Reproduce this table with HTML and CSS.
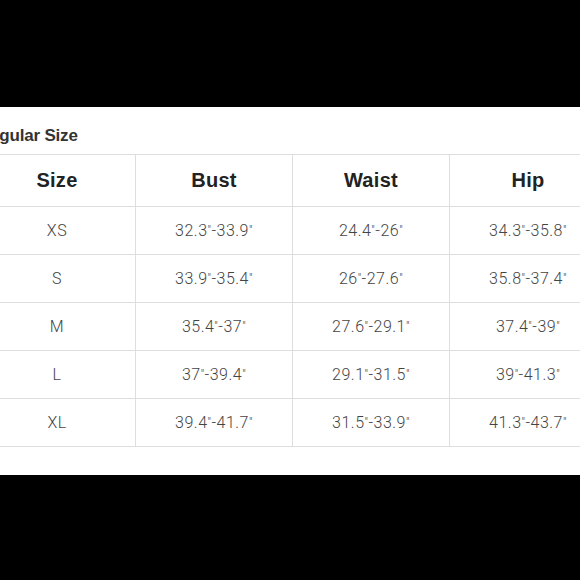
FILE: index.html
```html
<!DOCTYPE html>
<html lang="en">
<head>
<meta charset="utf-8">
<title>Regular Size Chart</title>
<link rel="stylesheet" href="styles.css">
</head>
<body>
<div class="band"></div>
<section class="panel">
  <h2 class="title">Regular Size</h2>
  <table class="chart">
    <thead>
      <tr><th>Size</th><th>Bust</th><th>Waist</th><th>Hip</th></tr>
    </thead>
    <tbody>
      <tr><td>XS</td><td>32.3<span class="in">"</span>-33.9<span class="in">"</span></td><td>24.4<span class="in">"</span>-26<span class="in">"</span></td><td>34.3<span class="in">"</span>-35.8<span class="in">"</span></td></tr>
      <tr><td>S</td><td>33.9<span class="in">"</span>-35.4<span class="in">"</span></td><td>26<span class="in">"</span>-27.6<span class="in">"</span></td><td>35.8<span class="in">"</span>-37.4<span class="in">"</span></td></tr>
      <tr><td>M</td><td>35.4<span class="in">"</span>-37<span class="in">"</span></td><td>27.6<span class="in">"</span>-29.1<span class="in">"</span></td><td>37.4<span class="in">"</span>-39<span class="in">"</span></td></tr>
      <tr><td>L</td><td>37<span class="in">"</span>-39.4<span class="in">"</span></td><td>29.1<span class="in">"</span>-31.5<span class="in">"</span></td><td>39<span class="in">"</span>-41.3<span class="in">"</span></td></tr>
      <tr><td>XL</td><td>39.4<span class="in">"</span>-41.7<span class="in">"</span></td><td>31.5<span class="in">"</span>-33.9<span class="in">"</span></td><td>41.3<span class="in">"</span>-43.7<span class="in">"</span></td></tr>
    </tbody>
  </table>
</section>
</body>
</html>
```
FILE: styles.css
```css
html, body {
  margin: 0;
  padding: 0;
  background: #000;
  overflow: hidden;
}
body {
  width: 580px;
  height: 580px;
}
.band {
  height: 107px;
}
.panel {
  background: #fff;
  height: 368px;
  box-sizing: border-box;
  padding-top: 19px;
  margin-left: -22px;
  width: 660px;
}
.title {
  margin: 0 0 8px 0;
  font-family: "Liberation Sans", Arial, sans-serif;
  font-size: 17px;
  line-height: 20px;
  font-weight: 600;
  color: #333;
  letter-spacing: -0.2px;
}
.chart {
  border-collapse: collapse;
  table-layout: fixed;
  width: 628px;
}
.chart th,
.chart td {
  width: 156px;
  border: 1px solid #dedede;
  text-align: center;
  vertical-align: middle;
  padding: 0;
}
.chart th {
  height: 51px;
  font-family: "Liberation Sans", Arial, sans-serif;
  font-weight: 700;
  font-size: 20px;
  color: #222;
  letter-spacing: 0.3px;
}
.chart td {
  height: 47px;
  font-family: Roboto, "Liberation Sans", sans-serif;
  font-weight: 300;
  font-size: 16px;
  letter-spacing: 0.5px;
  color: #444;
}
.in {
  font-size: 0.75em;
  position: relative;
  top: -1px;
}
```
